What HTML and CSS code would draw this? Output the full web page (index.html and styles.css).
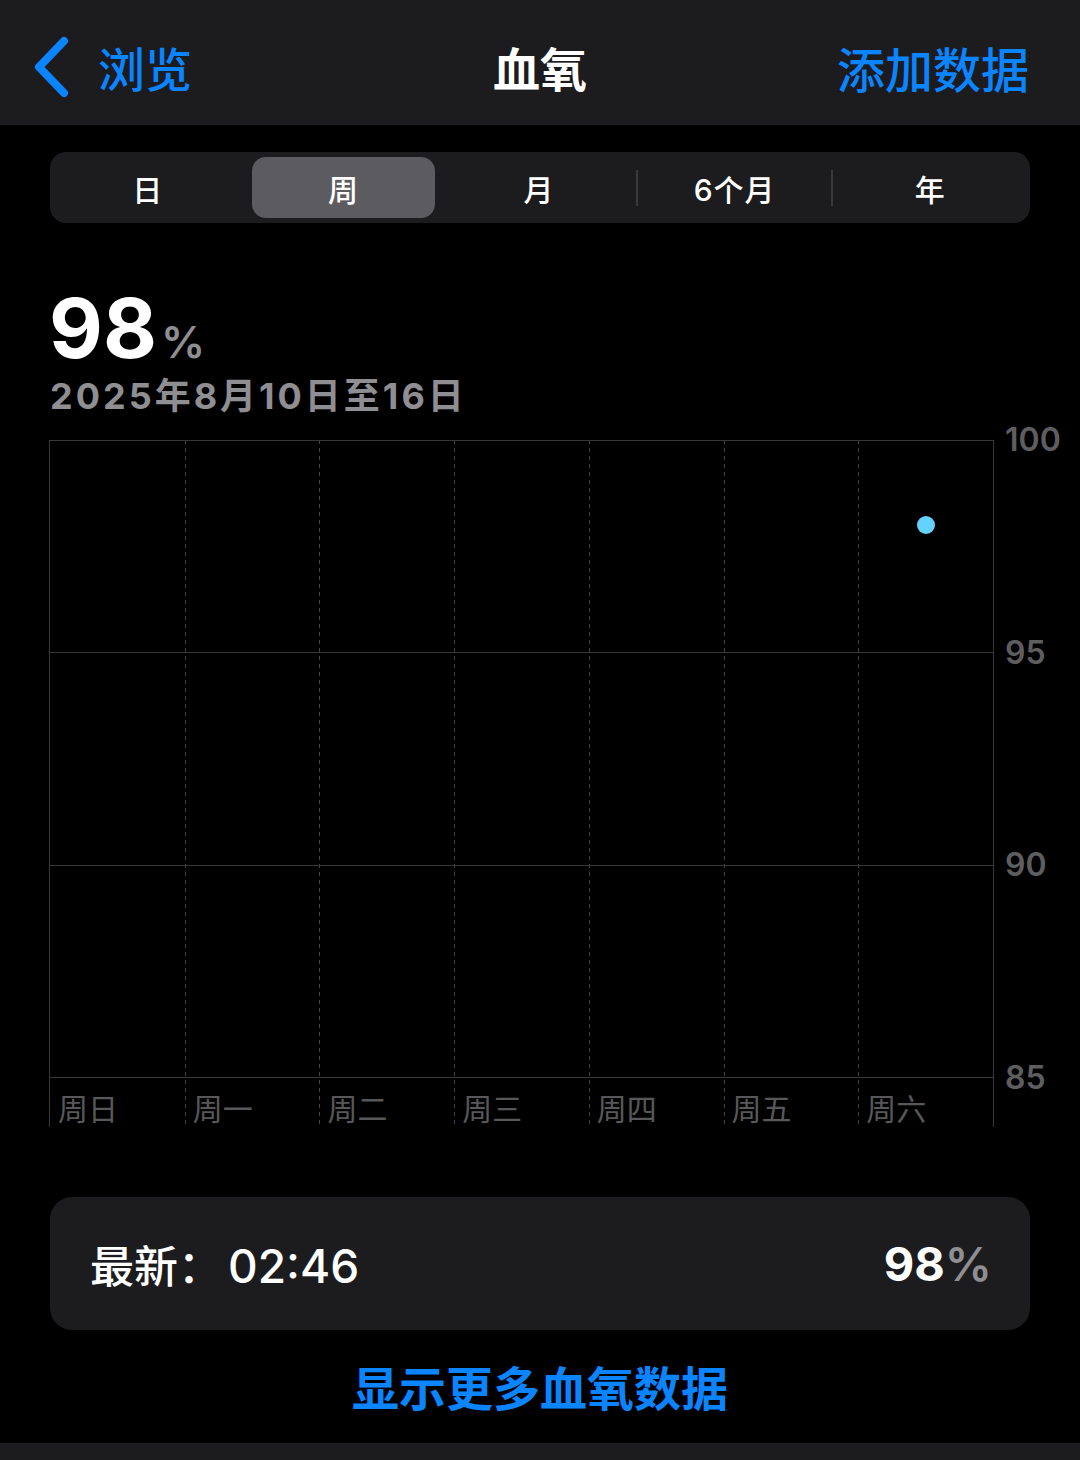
FILE: index.html
```html
<!DOCTYPE html>
<html lang="zh-CN">
<head>
<meta charset="utf-8">
<title>血氧</title>
<link rel="stylesheet" href="styles.css">
</head>
<body>
<header class="nav">
  <div class="nav-left">
    <svg class="chev" width="40" height="62" viewBox="0 0 40 62"><polyline points="32,5 7,31 32,57" fill="none" stroke="#0a84ff" stroke-width="8" stroke-linecap="round" stroke-linejoin="round"/></svg>
    <span class="nav-back">浏览</span>
  </div>
  <div class="nav-title">血氧</div>
  <div class="nav-right">添加数据</div>
</header>
<main class="main">
  <div class="seg">
    <div class="seg-item">日</div>
    <div class="seg-item active">周</div>
    <div class="seg-item">月</div>
    <div class="seg-item div">6个月</div>
    <div class="seg-item div">年</div>
  </div>
  <div class="value"><span class="num">98</span><span class="unit">%</span></div>
  <div class="date">2025年8月10日至16日</div>
  <div class="chart">
    <div class="plot">
      <div class="cols">
        <div class="col"><span>周日</span></div>
        <div class="col"><span>周一</span></div>
        <div class="col"><span>周二</span></div>
        <div class="col"><span>周三</span></div>
        <div class="col"><span>周四</span></div>
        <div class="col"><span>周五</span></div>
        <div class="col"><span>周六</span></div>
      </div>
      <div class="rows">
        <div class="row"></div>
        <div class="row"></div>
        <div class="row last"></div>
        <div class="dot" style="left:92.857%;top:13.333%"></div>
      </div>
    </div>
    <div class="yaxis">
      <span>100</span>
      <span>95</span>
      <span>90</span>
      <span>85</span>
    </div>
  </div>
  <div class="card">
    <div class="latest"><span class="cjk">最新：</span><span class="time">02:46</span></div>
    <div class="card-val"><span class="n">98</span><span class="u">%</span></div>
  </div>
  <div class="more">显示更多血氧数据</div>
</main>
<div class="footer"></div>
</body>
</html>
```
FILE: styles.css
```css
* { box-sizing: border-box; }
html, body { margin: 0; padding: 0; background: #000; }
body {
  width: 1080px;
  height: 1460px;
  overflow: hidden;
  font-family: Inter, "Noto Sans CJK SC", sans-serif;
  color: #fff;
  display: flex;
  flex-direction: column;
}
.nav {
  height: 125px;
  background: #1c1c1e;
  display: grid;
  grid-template-columns: 1fr auto 1fr;
  align-items: center;
  padding: 8px 52px 0 52px;
}
.nav-left { display: flex; align-items: center; gap: 26px; margin-left: -20px; }
.chev { display: block; }
.nav-back {
  font-family: "Noto Sans CJK SC", sans-serif;
  font-size: 47px;
  font-weight: 500;
  color: #0a84ff;
  line-height: 1;
}
.nav-title {
  font-family: "Noto Sans CJK SC", sans-serif;
  font-size: 47px;
  font-weight: 700;
  line-height: 1;
}
.nav-right {
  justify-self: end;
  font-family: "Noto Sans CJK SC", sans-serif;
  font-size: 48px;
  font-weight: 500;
  color: #0a84ff;
  line-height: 1;
  margin-right: -1px;
}
.main { padding: 0 50px; display: flex; flex-direction: column; }
.seg {
  margin-top: 27px;
  height: 71px;
  background: #1c1c1e;
  border-radius: 16px;
  padding: 5px 2px 5px 0;
  display: grid;
  grid-template-columns: repeat(5, 1fr);
}
.seg-item {
  position: relative;
  display: flex;
  align-items: center;
  justify-content: center;
  font-family: Inter, "Noto Sans CJK SC", sans-serif;
  font-size: 30px;
  font-weight: 500;
  color: #fff;
  letter-spacing: 1px;
}
.seg-item.active {
  background: #5c5c60;
  border-radius: 14px;
  margin: 0 6px;
}
.seg-item.div::before {
  content: "";
  position: absolute;
  left: -1px;
  top: 13px;
  width: 2px;
  height: 36px;
  background: #3a3a3c;
}
.value {
  margin-top: 64px;
  height: 82px;
  line-height: 82px;
  display: flex;
  align-items: baseline;
}
.num { font-size: 83px; font-weight: 700; margin-left: -1px; }
.unit { font-size: 44px; font-weight: 600; color: #8e8e93; margin-left: 4px; }
.date {
  margin-top: 5px;
  font-size: 36px;
  line-height: 44px;
  font-weight: 700;
  color: #8e8e93;
  letter-spacing: 3px;
}
.chart {
  margin-top: 7px;
  margin-left: -1px;
  display: flex;
  align-items: flex-start;
}
.plot {
  flex: none;
  margin-top: 15px;
  width: 945px;
  height: 687px;
  border-left: 1px solid #38383a;
  border-right: 1px solid #38383a;
  display: grid;
}
.cols, .rows { grid-area: 1 / 1; }
.cols {
  display: grid;
  grid-template-columns: repeat(7, 1fr);
}
.col {
  display: flex;
  align-items: flex-end;
  padding: 0 0 2px 8px;
}
.col + .col {
  background-image: repeating-linear-gradient(to bottom, #444446 0, #444446 4px, transparent 4px, transparent 8px);
  background-size: 1px 100%;
  background-repeat: no-repeat;
  background-position: left top;
}
.col span {
  font-family: "Noto Sans CJK SC", sans-serif;
  font-size: 30px;
  line-height: 36px;
  color: #58585a;
}
.rows {
  position: relative;
  height: 638px;
  display: flex;
  flex-direction: column;
}
.row { flex: 1; border-top: 1px solid #38383a; }
.row.last { border-bottom: 1px solid #38383a; }
.dot {
  position: absolute;
  width: 18px;
  height: 18px;
  margin: -9px 0 0 -9px;
  border-radius: 50%;
  background: #64d2ff;
}
.yaxis {
  flex: none;
  margin-left: 11px;
  height: 668px;
  display: flex;
  flex-direction: column;
  justify-content: space-between;
}
.yaxis span {
  font-size: 32px;
  line-height: 30px;
  font-weight: 600;
  color: #5e5e60;
}
.card {
  margin-top: 70px;
  height: 133px;
  background: #1c1c1e;
  border-radius: 22px;
  padding: 0 40px;
  display: flex;
  align-items: center;
  justify-content: space-between;
}
.latest { display: flex; align-items: baseline; }
.latest .cjk {
  font-family: "Noto Sans CJK SC", sans-serif;
  font-size: 44px;
  font-weight: 500;
}
.latest .time { font-size: 46px; font-weight: 500; margin-left: 6px; }
.card-val { font-size: 47px; font-weight: 700; margin-right: -2px; }
.card-val .u { color: #8e8e93; font-weight: 600; }
.more {
  margin-top: 26px;
  height: 60px;
  line-height: 60px;
  text-align: center;
  font-family: "Noto Sans CJK SC", sans-serif;
  font-size: 47px;
  font-weight: 700;
  color: #0a84ff;
}
.footer {
  margin-top: auto;
  height: 17px;
  background: #1c1c1e;
}
```
